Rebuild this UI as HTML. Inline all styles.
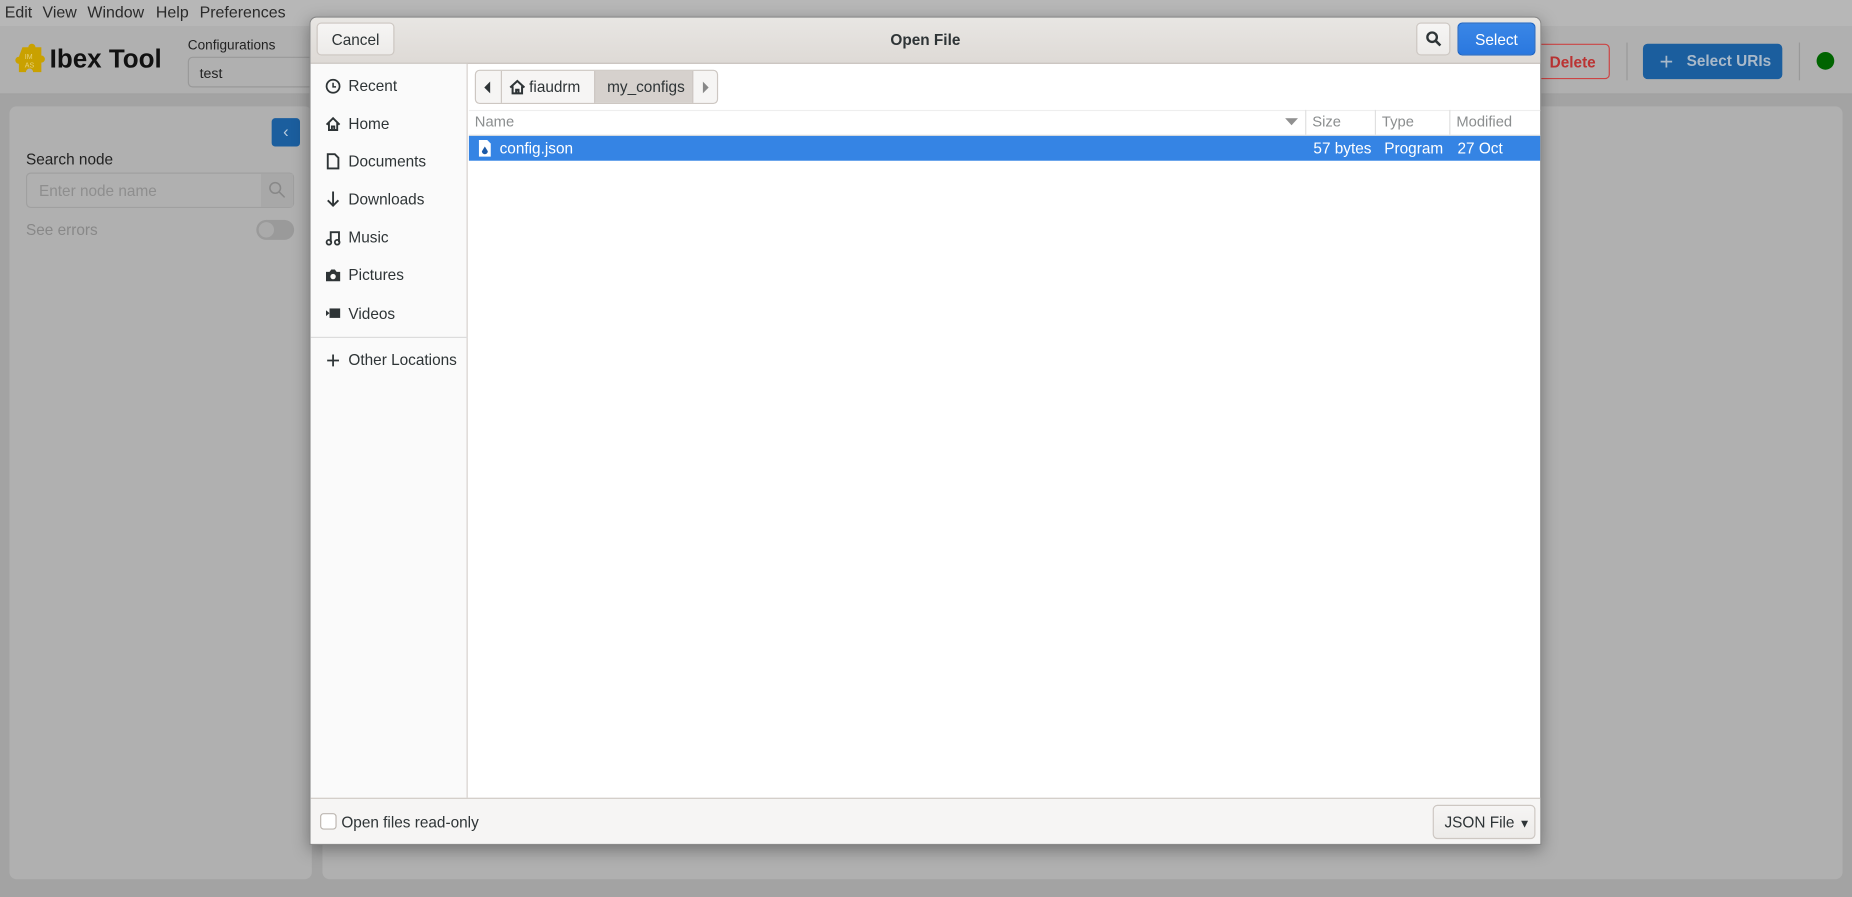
<!DOCTYPE html>
<html><head><meta charset="utf-8"><style>
*{box-sizing:border-box;margin:0;padding:0}
html,body{width:1852px;height:897px;overflow:hidden;background:#a3a3a3}
#s{position:absolute;left:0;top:0;width:1568px;height:759px;transform:scale(1.18112,1.1818);transform-origin:0 0;font-family:"Liberation Sans",sans-serif;background:#a3a3a3}
.a{position:absolute;white-space:nowrap}
.menu{left:0;top:0;width:1568px;height:22px;background:#b7b7b7;font-size:13.5px;color:#2a2a2a}
.menu span{position:absolute;top:3px}
.hdr{left:0;top:22px;width:1568px;height:58px;background:#b0b0b0;border-bottom:1px solid #a0a0a0}
.panel{background:#b0b0b0;border-radius:6px}
.dlg{left:262px;top:14px;width:1043px;height:701px;background:#fff;border:1px solid #8a8a8a;border-radius:6px 6px 0 0;box-shadow:0 4px 14px rgba(0,0,0,.35);overflow:hidden;font-size:13px;color:#2e3436;font-family:"Liberation Sans",sans-serif}
.btn{position:absolute;border:1px solid #cdc7c2;border-radius:4px;background:linear-gradient(#f6f5f4,#edebe9);text-align:center;white-space:nowrap}
.side div{position:absolute;left:32px;font-size:13px;white-space:nowrap}
.side svg{position:absolute;left:12px}
.col{position:absolute;top:81px;font-size:12.5px;color:#8b8e8f}
.sep{position:absolute;top:78px;width:1px;height:21px;background:#e0e0e0}
</style></head><body><div id="s">
<div class="a menu"><span style="left:4px">Edit</span><span style="left:36px">View</span><span style="left:74px">Window</span><span style="left:132px">Help</span><span style="left:169px">Preferences</span></div>
<div class="a hdr">
 <svg class="a" style="left:11px;top:14px" width="30" height="30" viewBox="0 0 30 30"><path d="M8 4h5a3 3 0 0 1 6 0h5v7a3 3 0 0 1 0 6v8h-7a3 3 0 0 0-6 0H5v-7a3 3 0 0 1 0-6z" fill="#c9a100"/><text x="10" y="14" font-size="6" fill="#e8d27a" font-family="Liberation Sans">IM</text><text x="10" y="21" font-size="6" fill="#e8d27a" font-family="Liberation Sans">AS</text></svg>
 <div class="a" style="left:42px;top:15px;font-size:22px;font-weight:bold;color:#111">Ibex Tool</div>
 <div class="a" style="left:159px;top:11px;font-size:11.5px;color:#222">Configurations</div>
 <div class="a" style="left:159px;top:26px;width:110px;height:26px;border:1px solid #999;border-radius:4px;font-size:12px;padding:6px 9px;color:#222">test</div>
 <div class="a" style="left:1290px;top:15px;width:73px;height:30px;border:1px solid #c44;border-radius:4px;color:#b33;font-weight:bold;font-size:13px;padding:7px 0 0 21px">Delete</div>
 <div class="a" style="left:1377px;top:14px;width:1px;height:32px;background:#999"></div>
 <div class="a" style="left:1391px;top:15px;width:118px;height:30px;background:#1b5e9e;border-radius:4px;color:#a9b9c9;font-weight:bold;font-size:13px;padding:7px 0 0 37px">Select URIs</div>
 <div class="a" style="left:1405px;top:20px;color:#a9b9c9;font-size:20px">+</div>
 <div class="a" style="left:1523px;top:14px;width:1px;height:32px;background:#999"></div>
 <div class="a" style="left:1538px;top:22px;width:15px;height:15px;border-radius:50%;background:#006400"></div>
</div>
<div class="a panel" style="left:8px;top:90px;width:256px;height:654px">
 <div class="a" style="left:222px;top:10px;width:24px;height:24px;background:#1b5e9e;border-radius:3px;color:#bcd;font-size:14px;text-align:center;line-height:22px">‹</div>
 <div class="a" style="left:14px;top:37px;font-size:13px;color:#222">Search node</div>
 <div class="a" style="left:14px;top:56px;width:227px;height:30px;border:1px solid #a0a0a0;border-radius:4px;font-size:13px;color:#8e8e8e;padding:7px 10px">Enter node name</div>
 <div class="a" style="left:213px;top:57px;width:27px;height:28px;background:#a8a8a8"></div>
 <svg class="a" style="left:219px;top:63px" width="15" height="15"><circle cx="6" cy="6" r="4.5" fill="none" stroke="#888" stroke-width="1.3"/><path d="M9.5 9.5 14 14" stroke="#888" stroke-width="1.3"/></svg>
 <div class="a" style="left:14px;top:97px;font-size:13px;color:#888">See errors</div>
 <div class="a" style="left:209px;top:96px;width:32px;height:17px;border-radius:9px;background:#9a9a9a"><div style="position:absolute;left:2px;top:2px;width:13px;height:13px;border-radius:50%;background:#aaa"></div></div>
</div>
<div class="a panel" style="left:273px;top:90px;width:1287px;height:654px"></div>

<div class="a dlg">
 <div class="a" style="left:0;top:0;width:1043px;height:39px;background:linear-gradient(#e8e6e3,#dedad6);border-bottom:1px solid #c0bab5"></div>
 <div class="btn" style="left:5px;top:4px;width:66px;height:28px;padding-top:6px">Cancel</div>
 <div class="a" style="left:0;top:11px;width:1041px;text-align:center;font-weight:bold">Open File</div>
 <div class="btn" style="left:936px;top:4px;width:29px;height:28px"><svg width="14" height="14" style="margin-top:6px" viewBox="0 0 14 14"><circle cx="5.5" cy="5.5" r="4" fill="none" stroke="#2e3436" stroke-width="2"/><path d="M8.5 8.5 12.5 12.5" stroke="#2e3436" stroke-width="2.2"/></svg></div>
 <div class="a" style="left:971px;top:4px;width:66px;height:28px;background:linear-gradient(#3a86e6,#2a78df);border:1px solid #1b63c4;border-radius:4px;color:#fff;text-align:center;padding-top:6px">Select</div>
 <div class="a side" style="left:0;top:39px;width:133px;height:622px;background:#fafafa;border-right:1px solid #d6d1cd">
  <svg style="top:12px" width="14" height="14"><circle cx="7" cy="7" r="5.5" fill="none" stroke="#2e3436" stroke-width="1.5"/><path d="M7 4v3.5h2.5" fill="none" stroke="#2e3436" stroke-width="1.3"/></svg><div style="top:11px">Recent</div>
  <svg style="top:44px" width="14" height="14"><path d="M1.5 7.5 7 2l5.5 5.5M3.5 6v6h7V6M6 12V9h2v3" fill="none" stroke="#2e3436" stroke-width="1.6"/></svg><div style="top:43px">Home</div>
  <svg style="top:75px" width="14" height="15"><path d="M2.5 1.5h6l3 3v9h-9z" fill="none" stroke="#2e3436" stroke-width="1.6"/></svg><div style="top:75px">Documents</div>
  <svg style="top:107px" width="14" height="15"><path d="M7 1v12M2.5 8.5 7 13l4.5-4.5" fill="none" stroke="#2e3436" stroke-width="1.6"/></svg><div style="top:107px">Downloads</div>
  <svg style="top:140px" width="14" height="14"><path d="M5 11V2.5h7V11" fill="none" stroke="#2e3436" stroke-width="1.6"/><circle cx="3.5" cy="11" r="2" fill="none" stroke="#2e3436" stroke-width="1.5"/><circle cx="10.5" cy="11" r="2" fill="none" stroke="#2e3436" stroke-width="1.5"/></svg><div style="top:139px">Music</div>
  <svg style="top:172px" width="14" height="14"><path d="M1 4h3l1.5-2h3L10 4h3v8H1z" fill="#2e3436"/><circle cx="7" cy="8" r="2.3" fill="#fafafa"/></svg><div style="top:171px">Pictures</div>
  <svg style="top:204px" width="14" height="14"><path d="M1 4.5 4 7 1 9.5z" fill="#2e3436"/><rect x="4" y="3" width="9" height="8" fill="#2e3436"/></svg><div style="top:204px">Videos</div>
  <div style="left:0;top:231px;width:133px;height:1px;background:#dcdcdc"></div>
  <svg style="top:244px" width="14" height="14"><path d="M7 2v10M2 7h10" stroke="#2e3436" stroke-width="1.5"/></svg><div style="top:243px">Other Locations</div>
 </div>
 <div class="a" style="left:139px;top:44px;width:206px;height:29px;border:1px solid #cdc7c2;border-radius:4px;background:#f6f5f4;overflow:hidden">
  <svg class="a" style="left:7px;top:9px" width="6" height="10"><path d="M5 0v10L0 5z" fill="#2e3436"/></svg>
  <div class="a" style="left:21px;top:0;width:1px;height:29px;background:#cdc7c2"></div>
  <svg class="a" style="left:28px;top:7px" width="14" height="13"><path d="M1 7 7 1.5 13 7M3 6v6h8V6M6 12V9h2v3" fill="none" stroke="#2e3436" stroke-width="1.7"/></svg>
  <div class="a" style="left:45px;top:6px">fiaudrm</div>
  <div class="a" style="left:100px;top:0;width:84px;height:29px;background:#d6d1cd;border-left:1px solid #cdc7c2;border-right:1px solid #cdc7c2"></div>
  <div class="a" style="left:111px;top:6px">my_configs</div>
  <svg class="a" style="left:192px;top:9px" width="6" height="10"><path d="M0 0v10L5 5z" fill="#888"/></svg>
 </div>
 <div class="a" style="left:134px;top:78px;width:908px;height:1px;background:#eee"></div>
 <div class="col" style="left:139px">Name</div>
 <svg class="a" style="left:825px;top:85px" width="11" height="7"><path d="M0 0h11L5.5 6z" fill="#909090"/></svg>
 <div class="sep" style="left:842px"></div><div class="col" style="left:848px">Size</div>
 <div class="sep" style="left:901px"></div><div class="col" style="left:907px">Type</div>
 <div class="sep" style="left:964px"></div><div class="col" style="left:970px">Modified</div>
 <div class="a" style="left:134px;top:99px;width:908px;height:1px;background:#e0e0e0"></div>
 <div class="a" style="left:134px;top:100px;width:908px;height:21px;background:#3584e4;color:#fff">
  <svg class="a" style="left:8px;top:3px" width="11" height="15"><path d="M.5.5h7l3 3v11H.5z" fill="#fff"/><path d="M5.5 6 3 10a2.5 2.5 0 0 0 5 0z" fill="#1c5aa8"/></svg>
  <div class="a" style="left:26px;top:3px">config.json</div>
  <div class="a" style="left:715px;top:3px">57 bytes</div>
  <div class="a" style="left:775px;top:3px">Program</div>
  <div class="a" style="left:837px;top:3px">27 Oct</div>
 </div>
 <div class="a" style="left:0;top:660px;width:1043px;height:41px;background:#f6f5f4;border-top:1px solid #d0cbc6"></div>
 <div class="a" style="left:8px;top:673px;width:14px;height:14px;border:1px solid #bdb7b1;border-radius:3px;background:#fff"></div>
 <div class="a" style="left:26px;top:673px">Open files read-only</div>
 <div class="btn" style="left:950px;top:666px;width:87px;height:29px;padding-top:6px;text-align:left;padding-left:9px">JSON File <span style="font-size:10px">▼</span></div>
</div>
</div></body></html>
